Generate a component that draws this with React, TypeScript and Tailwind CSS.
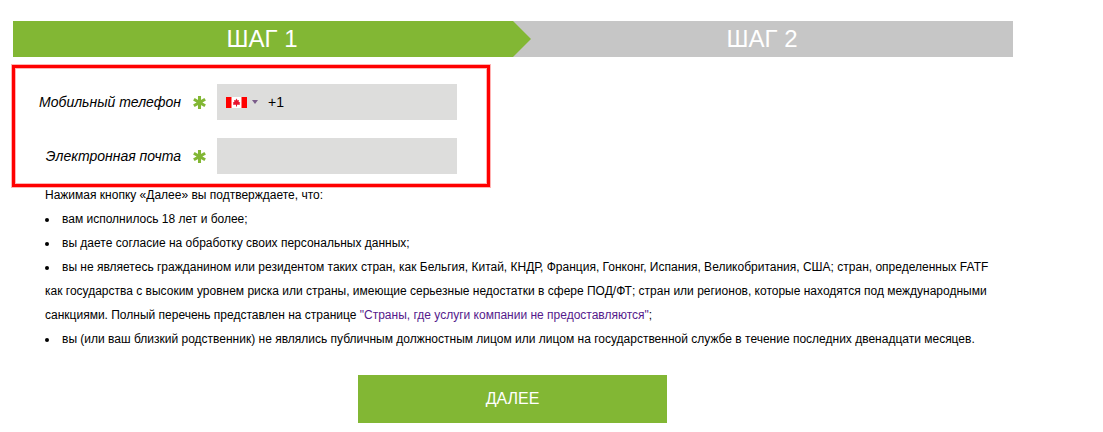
export default function App() {
  return (
    <div className="w-[1103px] h-[432px] overflow-hidden bg-white font-['Liberation_Sans',Arial,sans-serif] text-black pt-[21px]">
      <div className="relative ml-[13px] flex h-9 w-[1000px] text-[24px] leading-9 text-white">
        <div className="w-[500px] bg-[#82b734] pr-[2px] text-center">ШАГ 1</div>
        <div className="w-[500px] bg-[#c6c6c6] pr-[2px] text-center">ШАГ 2</div>
        <div className="absolute left-[500px] top-0 h-9 w-[18px] bg-[#82b734] [clip-path:polygon(0_0,100%_50%,0_100%)]" />
      </div>

      <div className="ml-[12px] mt-[8px] h-[122px] w-[478px] border-[3px] border-[#ff0000] pt-[16px] shadow-[0_0_0_1px_#ffb3b3,inset_0_0_0_1px_#ffb3b3]">
        <div className="flex h-9 items-center">
          <div className="w-[166px] text-right text-[14px] italic">Мобильный телефон</div>
          <div className="w-[36px]">
            <Star />
          </div>
          <div className="flex h-9 w-[240px] items-center bg-[#dddddc] pl-[9px] text-[14px]">
            <Flag />
            <span className="ml-[5px] h-0 w-0 border-x-[3px] border-t-[4px] border-x-transparent border-t-[#7a5c8a]" />
            <span className="ml-[10px]">+1</span>
          </div>
        </div>
        <div className="mt-[18px] flex h-9 items-center">
          <div className="w-[166px] text-right text-[14px] italic">Электронная почта</div>
          <div className="w-[36px]">
            <Star />
          </div>
          <div className="h-9 w-[240px] bg-[#dddddc]" />
        </div>
      </div>

      <div className="ml-[45px] mt-[-4px] w-[960px] text-[12px] leading-[24px]">
        <p>Нажимая кнопку «Далее» вы подтверждаете, что:</p>
        <p className="flex items-center">
          <Dot />
          вам исполнилось 18 лет и более;
        </p>
        <p className="flex items-center">
          <Dot />
          вы даете согласие на обработку своих персональных данных;
        </p>
        <p>
          <span className="mr-[13px] inline-block h-1 w-1 translate-y-[-1px] rounded-full bg-black" />
          вы не являетесь гражданином или резидентом таких стран, как Бельгия, Китай, КНДР, Франция, Гонконг, Испания, Великобритания, США; стран, определенных FATF как государства с высоким уровнем риска или страны, имеющие серьезные недостатки в сфере ПОД/ФТ; стран или регионов, которые находятся под международными санкциями. Полный перечень представлен на странице <span className="text-[#551a8b]">"Страны, где услуги компании не предоставляются"</span>;
        </p>
        <p className="flex items-center">
          <Dot />
          вы (или ваш близкий родственник) не являлись публичным должностным лицом или лицом на государственной службе в течение последних двенадцати месяцев.
        </p>
      </div>

      <div className="ml-[358px] mt-[24px] flex h-12 w-[309px] items-center justify-center bg-[#82b734] text-[16px] text-white">
        ДАЛЕЕ
      </div>
    </div>
  );
}

function Dot() {
  return <span className="mr-[13px] inline-block h-1 w-1 shrink-0 translate-y-[1px] rounded-full bg-black" />;
}

function Star() {
  return (
    <svg viewBox="0 0 12 12" className="mx-auto h-[13px] w-[13px]" aria-hidden="true">
      <path d="M6 0V12M0.8 3L11.2 9M11.2 3L0.8 9" stroke="#82b734" strokeWidth="2.8" fill="none" />
    </svg>
  );
}

function Flag() {
  return (
    <svg viewBox="0 0 21 11" className="h-[11px] w-[21px]" aria-hidden="true">
      <rect width="21" height="11" fill="#fff" />
      <rect width="5.5" height="11" fill="#f00" />
      <rect x="15.5" width="5.5" height="11" fill="#f00" />
      <path d="M10.5 1.5L11.6 3.4L13 3L12.6 5L14.2 5.6L13.6 6.8L14 7.8L11 7.8V9.5H10V7.8L7 7.8L7.4 6.8L6.8 5.6L8.4 5L8 3L9.4 3.4Z" fill="#e8112d" />
    </svg>
  );
}
